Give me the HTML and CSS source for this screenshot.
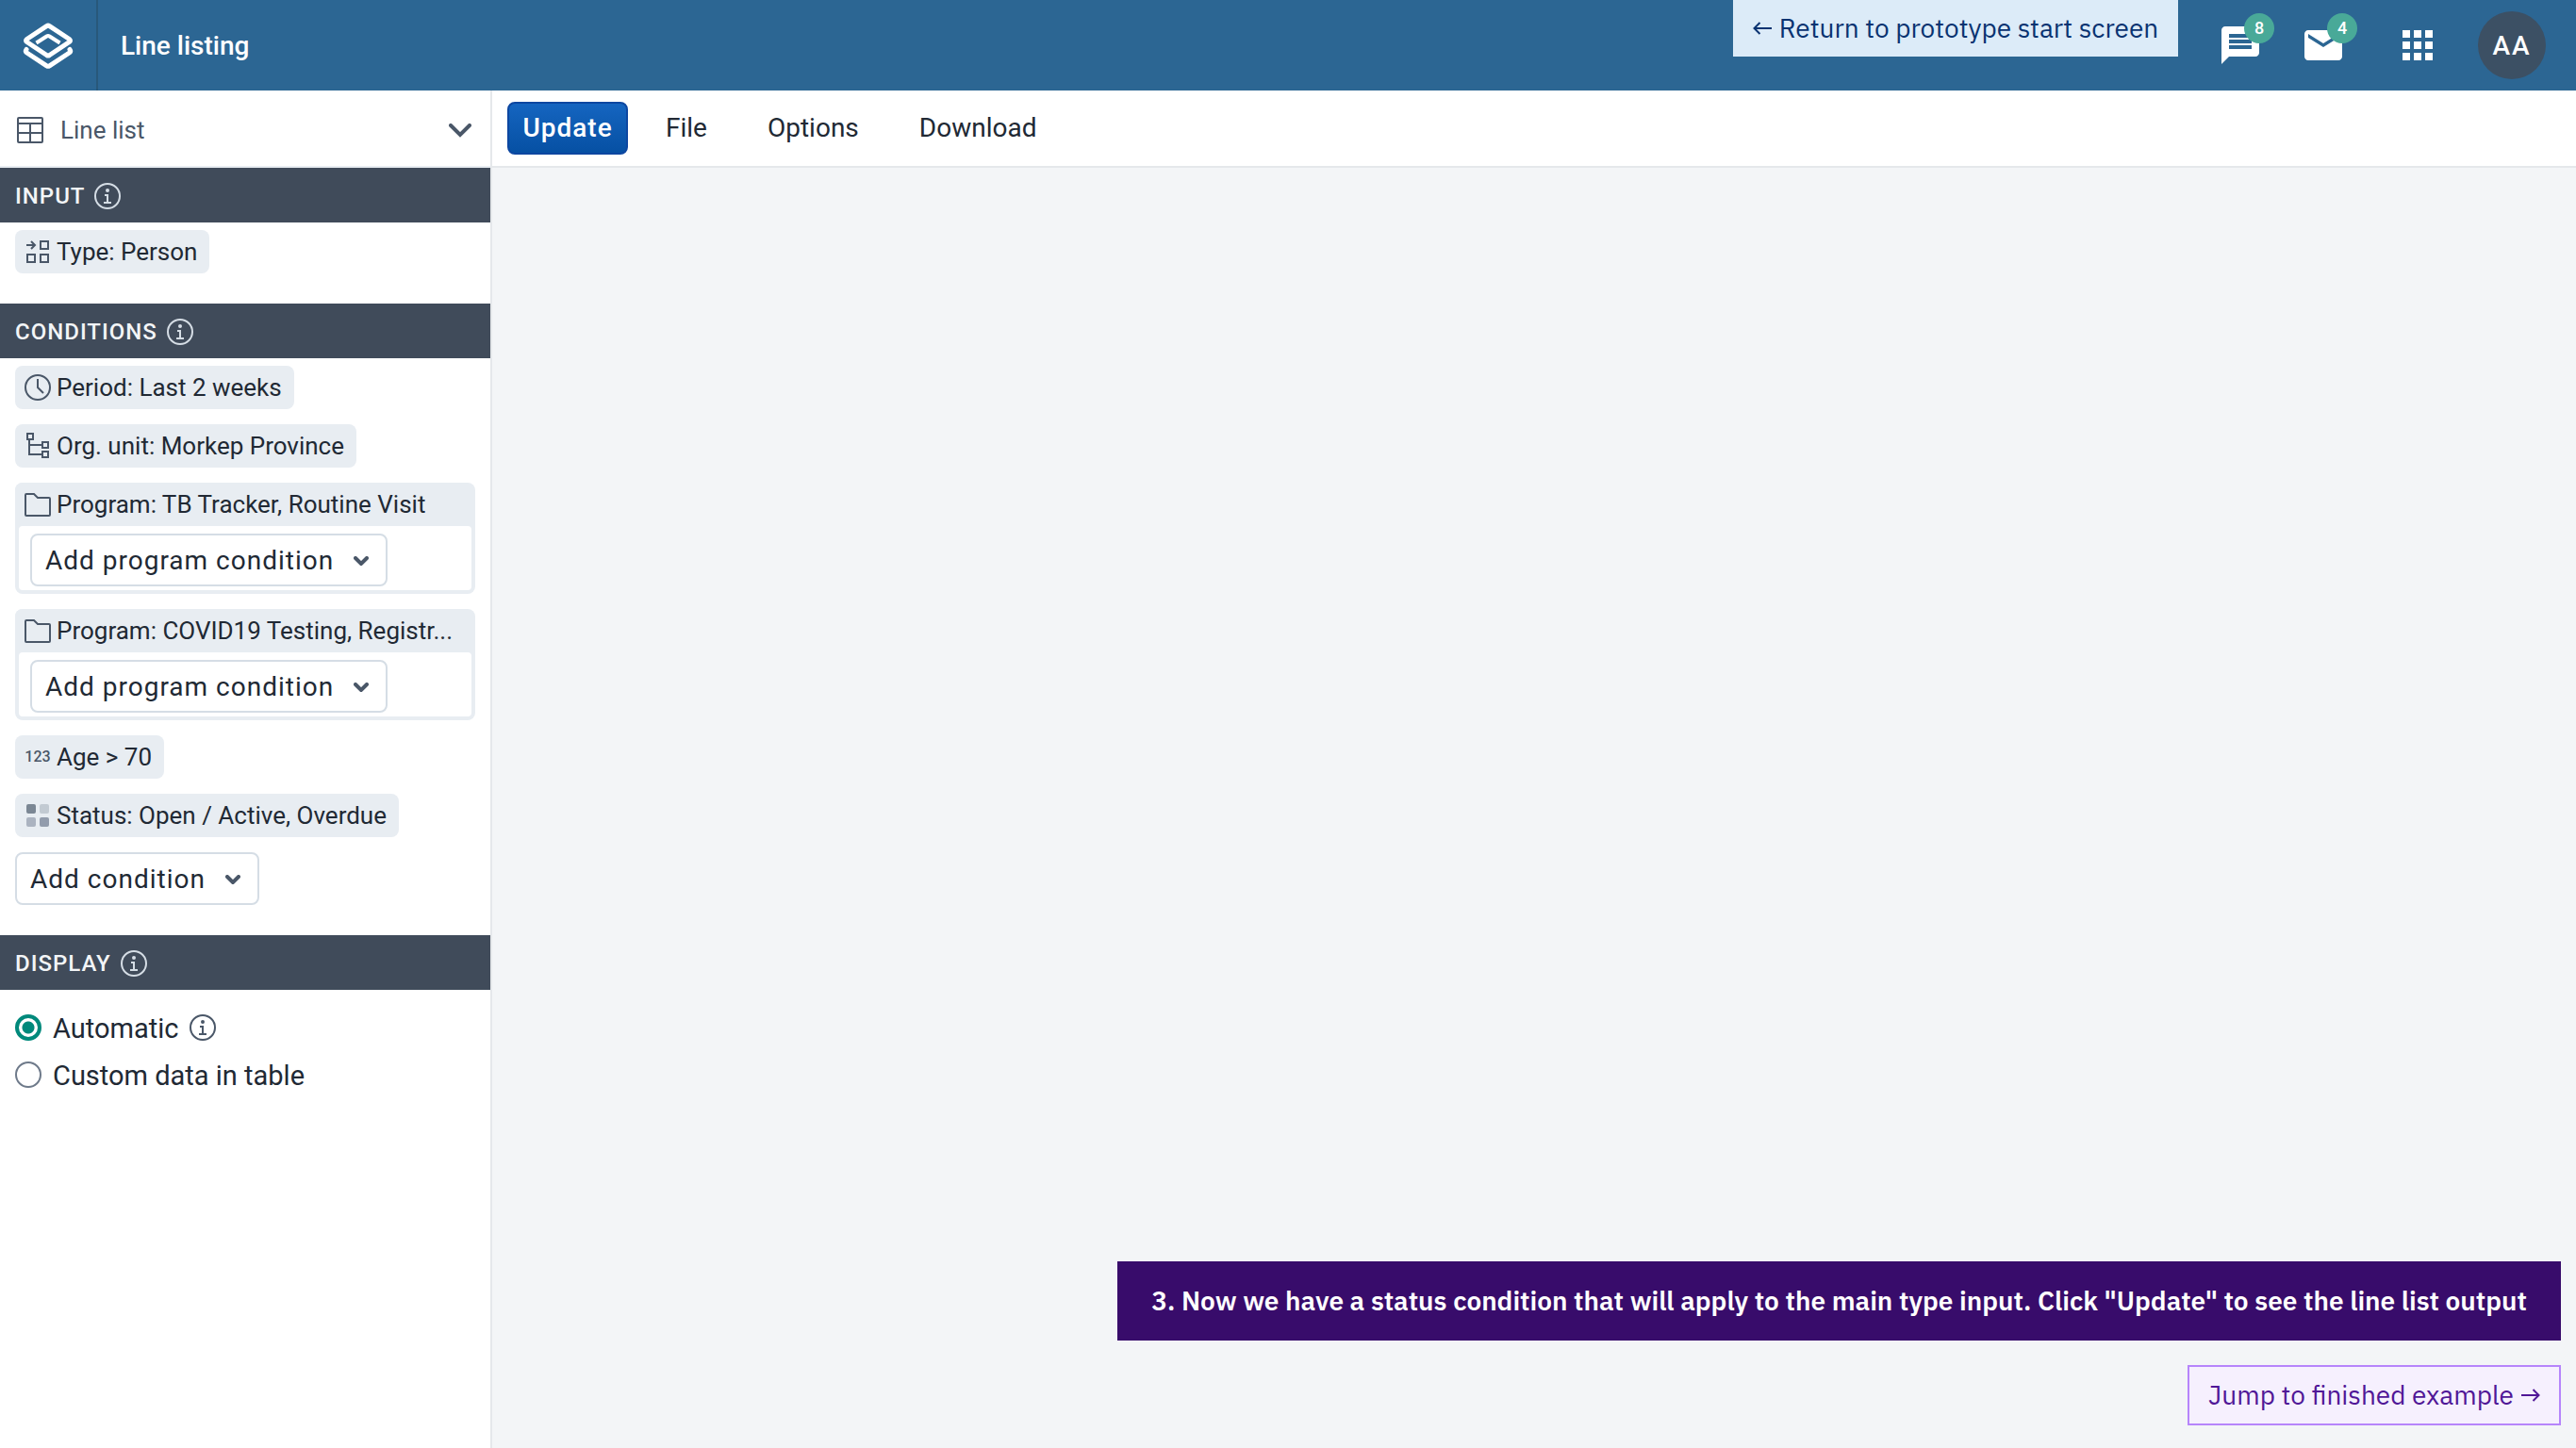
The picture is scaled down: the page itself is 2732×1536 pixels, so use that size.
FILE: index.html
```html
<!DOCTYPE html>
<html lang="en">
<head>
<meta charset="utf-8">
<title>Line listing</title>
<link rel="stylesheet" href="styles.css">
</head>
<body>
<header class="topbar">
  <a class="logo" href="#" aria-label="Home">
    <svg width="56" height="52" viewBox="0 0 56 52" fill="none" stroke="#fff" stroke-width="5" stroke-linejoin="round" stroke-linecap="round">
      <path d="M26.500 4.600Q28 3.700 29.500 4.600L50.500 18.500Q52.500 20 50.500 21.500L29.500 35.500Q28 36.400 26.500 35.500L5.500 21.500Q3.500 20 5.500 18.500Z"/>
      <path d="M15.500 22.500L26.500 15.500Q28 14.600 29.500 15.500L40.500 22.500" stroke-width="4" stroke-linecap="butt"/>
      <path d="M5 29.500Q3.500 31.500 5.500 33L26.500 46.800Q28 47.700 29.500 46.800L50.500 33Q52.500 31.500 51 29.500"/>
    </svg>
  </a>
  <h1 class="app-title">Line listing</h1>
  <a class="return-link" href="#"><svg width="20" height="14" viewBox="0 0 20 14" fill="none" stroke="currentColor" stroke-width="2"><path d="M20 7H2M7.500 1L1.500 7l6 6"/></svg>Return to prototype start screen</a>
  <nav class="header-actions" aria-label="Account">
    <a class="header-icon" href="#" aria-label="Interpretations">
      <svg width="48" height="48" viewBox="0 0 24 24" fill="#fff"><path d="M20 2H4c-1.100 0-1.990.9-1.990 2L2 22l4-4h14c1.100 0 2-.9 2-2V4c0-1.100-.9-2-2-2zm-2 12H6v-2h12v2zm0-3H6V9h12v2zm0-3H6V6h12v2z"/></svg>
      <span class="badge">8</span>
    </a>
    <a class="header-icon" href="#" aria-label="Messages">
      <svg width="48" height="48" viewBox="0 0 24 24" fill="#fff"><path d="M20 4H4c-1.100 0-1.990.9-1.990 2L2 18c0 1.100.9 2 2 2h16c1.100 0 2-.9 2-2V6c0-1.100-.9-2-2-2zm0 4l-8 5-8-5V6l8 5 8-5v2z"/></svg>
      <span class="badge">4</span>
    </a>
    <button class="header-icon apps" type="button" aria-label="Apps">
      <svg width="48" height="48" viewBox="0 0 24 24" fill="#fff"><path d="M4 8h4V4H4v4zm6 12h4v-4h-4v4zm-6 0h4v-4H4v4zm0-6h4v-4H4v4zm6 0h4v-4h-4v4zm6-10v4h4V4h-4zm-6 4h4V4h-4v4zm6 6h4v-4h-4v4zm0 6h4v-4h-4v4z"/></svg>
    </button>
    <button class="avatar" type="button">AA</button>
  </nav>
</header>

<svg width="0" height="0" class="symbols" aria-hidden="true">
  <symbol id="info" viewBox="0 0 28 28"><g fill="none" stroke="currentColor" stroke-width="2"><circle cx="14" cy="14" r="13"/><path d="M11 13h3v8M10 21h8"/></g><circle cx="14" cy="8" r="2" fill="currentColor"/></symbol>
  <symbol id="folder" viewBox="0 0 28 28"><path d="M1 4a1 1 0 0 1 1-1h8l4 4h12a1 1 0 0 1 1 1v17a1 1 0 0 1-1 1H2a1 1 0 0 1-1-1z" fill="none" stroke="currentColor" stroke-width="2"/></symbol>
  <symbol id="chevron" viewBox="0 0 16 10"><path d="M2 2l6 6 6-6" fill="none" stroke="currentColor" stroke-width="4" stroke-linecap="round"/></symbol>
</svg>

<div class="layout">
  <aside class="sidebar">
    <button class="type-picker" type="button">
      <svg width="28" height="28" viewBox="0 0 28 28" fill="none" stroke="currentColor" stroke-width="2"><rect x="1" y="1" width="26" height="26" rx="1"/><path d="M1 7h26M1 17h26M14 7v20"/></svg>
      <span class="grow">Line list</span>
      <svg width="24" height="15" viewBox="0 0 24 15" fill="none" stroke="currentColor" stroke-width="4" stroke-linecap="round"><path d="M2 2l10 10L22 2"/></svg>
    </button>

    <h2 class="section-title">Input <svg width="28" height="28"><use href="#info"/></svg></h2>
    <div class="section">
      <button class="chip" type="button">
        <svg width="28" height="28" viewBox="0 0 28 28" fill="none" stroke="currentColor" stroke-width="2"><path d="M2 7h9M7 3l4 4-4 4"/><rect x="17" y="3" width="8" height="8"/><rect x="3" y="17" width="8" height="8"/><rect x="17" y="17" width="8" height="8"/></svg>
        Type: Person
      </button>
    </div>

    <h2 class="section-title">Conditions <svg width="28" height="28"><use href="#info"/></svg></h2>
    <div class="section">
      <button class="chip" type="button">
        <svg width="28" height="28" viewBox="0 0 28 28" fill="none" stroke="currentColor" stroke-width="2"><circle cx="14" cy="14" r="13"/><path d="M14 5v9l6 6"/></svg>
        Period: Last 2 weeks
      </button>
      <button class="chip" type="button">
        <svg width="28" height="28" viewBox="0 0 28 28" fill="none" stroke="currentColor" stroke-width="2"><rect x="3" y="1" width="6" height="6"/><path d="M5 7v16h14M5 13h14"/><rect x="19" y="10" width="6" height="6"/><rect x="19" y="20" width="6" height="6"/></svg>
        Org. unit: Morkep Province
      </button>
      <div class="program">
        <button class="chip" type="button"><svg width="28" height="28"><use href="#folder"/></svg><span class="ellipsis">Program: TB Tracker, Routine Visit</span></button>
        <div class="program-body"><button class="add" type="button">Add program condition <svg width="16" height="10"><use href="#chevron"/></svg></button></div>
      </div>
      <div class="program">
        <button class="chip" type="button"><svg width="28" height="28"><use href="#folder"/></svg><span class="ellipsis">Program: COVID19 Testing, Registr...</span></button>
        <div class="program-body"><button class="add" type="button">Add program condition <svg width="16" height="10"><use href="#chevron"/></svg></button></div>
      </div>
      <button class="chip" type="button"><span class="number-icon">123</span>Age &gt; 70</button>
      <button class="chip" type="button">
        <svg width="28" height="28" viewBox="0 0 28 28"><rect x="2" y="2" width="10" height="10" rx="2" fill="#7b8794"/><rect x="16" y="2" width="10" height="10" rx="2" fill="#c2cad2"/><rect x="2" y="16" width="10" height="10" rx="2" fill="#abb3c0"/><rect x="16" y="16" width="10" height="10" rx="2" fill="#929cac"/></svg>
        Status: Open / Active, Overdue
      </button>
      <button class="add" type="button">Add condition <svg width="16" height="10"><use href="#chevron"/></svg></button>
    </div>

    <h2 class="section-title">Display <svg width="28" height="28"><use href="#info"/></svg></h2>
    <div class="options">
      <div class="option"><input type="radio" name="display" id="auto" checked><label for="auto">Automatic</label><svg width="28" height="28"><use href="#info"/></svg></div>
      <div class="option"><input type="radio" name="display" id="custom"><label for="custom">Custom data in table</label></div>
    </div>
  </aside>

  <div class="workspace">
    <div class="toolbar">
      <button class="update" type="button">Update</button>
      <button class="menu" type="button">File</button>
      <button class="menu" type="button">Options</button>
      <button class="menu" type="button">Download</button>
    </div>
    <main class="canvas">
      <p class="hint">3. Now we have a status condition that will apply to the main type input. Click "Update" to see the line list output</p>
      <a class="jump-link" href="#">Jump to finished example<svg width="20" height="14" viewBox="0 0 20 14" fill="none" stroke="currentColor" stroke-width="2"><path d="M0 7h18M12.500 1l6 6-6 6"/></svg></a>
    </main>
  </div>
</div>
</body>
</html>
```
FILE: styles.css
```css
* { box-sizing: border-box; }

body {
  margin: 0;
  min-height: 100vh;
  display: flex;
  flex-direction: column;
  font-family: Roboto, sans-serif;
  font-size: 28px;
  line-height: 32px;
  color: #212934;
  background: #f3f5f7;
}

button {
  font: inherit;
  color: inherit;
  background: none;
  border: 0;
  padding: 0;
  margin: 0;
  text-align: left;
}

a { color: inherit; text-decoration: none; }
h1, h2, p { margin: 0; }
svg { flex: none; display: block; }
.symbols { position: absolute; }

/* Top bar */
.topbar {
  display: flex;
  align-items: center;
  height: 96px;
  background: #2c6693;
  color: #fff;
}

.logo {
  display: flex;
  align-items: center;
  align-self: stretch;
  padding: 2px 23px 0;
  border-right: 2px solid #28587b;
}

.app-title {
  flex: 1;
  padding: 2px 0 0 24px;
  font-size: 28px;
  font-weight: 500;
}

.return-link {
  display: flex;
  align-items: center;
  justify-content: center;
  gap: 8px;
  align-self: flex-start;
  width: 472px;
  height: 60px;
  background: #dcebf8;
  color: #093371;
  font-family: "IBM Plex Sans", "Noto Sans", sans-serif;
  white-space: nowrap;
}

.header-actions {
  display: flex;
  align-items: center;
  gap: 40px;
  padding: 0 32px 0 42px;
}

.header-icon { position: relative; }
.apps { margin-left: 12px; }

.badge {
  position: absolute;
  top: -10px;
  right: -12px;
  width: 32px;
  height: 32px;
  border-radius: 50%;
  background: #49a998;
  font-size: 18px;
  font-weight: 500;
  text-align: center;
}

.avatar {
  width: 72px;
  height: 72px;
  padding-top: 2px;
  border-radius: 50%;
  background: #3c5064;
  font-weight: 500;
  letter-spacing: 2px;
  text-align: center;
}

/* Page columns */
.layout { display: flex; flex: 1; }

.sidebar {
  flex: none;
  width: 522px;
  border-right: 2px solid #e5e8eb;
  background: #fff;
}

.type-picker {
  display: flex;
  align-items: center;
  gap: 18px;
  width: 100%;
  height: 82px;
  padding: 4px 20px 0 18px;
  border-bottom: 2px solid #e8edf2;
  color: #4a5768;
  font-size: 26px;
}

.grow { flex: 1; }

.section-title {
  display: flex;
  align-items: center;
  gap: 10px;
  height: 58px;
  padding: 2px 16px 0;
  background: #404b5a;
  color: #f3f5f7;
  font-size: 24px;
  font-weight: 500;
  letter-spacing: 1px;
  text-transform: uppercase;
}

.section-title svg { color: #d5dde5; }

.section {
  display: flex;
  flex-direction: column;
  align-items: flex-start;
  gap: 16px;
  padding: 8px 16px 32px;
}

.chip {
  display: flex;
  align-items: center;
  gap: 6px;
  height: 46px;
  max-width: 100%;
  padding: 0 13px 0 10px;
  border-radius: 8px;
  background: #e8edf2;
  font-size: 26px;
  white-space: nowrap;
}

.chip svg { color: #4a5768; }

.ellipsis {
  overflow: hidden;
  text-overflow: ellipsis;
}

.number-icon {
  width: 28px;
  color: #4a5768;
  font-size: 16px;
  font-weight: 500;
  text-align: center;
}

.program {
  width: 100%;
  border-radius: 8px;
  background: #e8edf2;
  padding-bottom: 4px;
}

.program-body {
  margin: 0 4px;
  padding: 8px 12px 4px;
  border-radius: 4px;
  background: #fff;
}

.add {
  display: flex;
  align-items: center;
  gap: 21px;
  height: 56px;
  padding: 2px 18px 0 14px;
  border: 2px solid #d5dde5;
  border-radius: 8px;
  background: #fff;
  letter-spacing: 1px;
}

.add svg { color: #4a5768; }

/* Display options */
.options {
  display: flex;
  flex-direction: column;
  gap: 16px;
  padding: 23px 16px;
}

.option {
  display: flex;
  align-items: center;
  gap: 12px;
  font-size: 29px;
}

.option label { padding-top: 2px; }
.option svg { color: #4a5768; }

.option input {
  appearance: none;
  flex: none;
  width: 28px;
  height: 28px;
  margin: 0;
  border: 2px solid #6e7a8a;
  border-radius: 50%;
}

.option input:checked {
  border: 4px solid #00897b;
  background: radial-gradient(circle, #00897b 6px, #fff 7px);
}

/* Workspace */
.workspace {
  display: flex;
  flex: 1;
  flex-direction: column;
}

.toolbar {
  display: flex;
  align-items: center;
  height: 82px;
  padding: 0 16px;
  border-bottom: 2px solid #e5e8eb;
  background: #fff;
}

.update {
  height: 56px;
  width: 128px;
  margin-right: 16px;
  border: 2px solid #0d47a1;
  border-radius: 8px;
  background: linear-gradient(#1565c0, #0650a3);
  color: #fff;
  font-weight: 500;
  letter-spacing: 1px;
  text-align: center;
}

.menu { padding: 0 24px; margin-right: 16px; }

.canvas {
  display: flex;
  flex: 1;
  flex-direction: column;
  align-items: flex-end;
  justify-content: flex-end;
  gap: 26px;
  padding: 0 16px 24px;
}

.hint,
.jump-link {
  font-family: "IBM Plex Sans", "Noto Sans", sans-serif;
  white-space: nowrap;
}

.hint {
  padding: 26px 36px;
  background: #380c6b;
  color: #fff;
  font-weight: 600;
}

.jump-link {
  display: flex;
  align-items: center;
  justify-content: center;
  gap: 8px;
  width: 396px;
  height: 64px;
  border: 2px solid #b685fb;
  background: #f6f0fe;
  color: #501797;
}
```
